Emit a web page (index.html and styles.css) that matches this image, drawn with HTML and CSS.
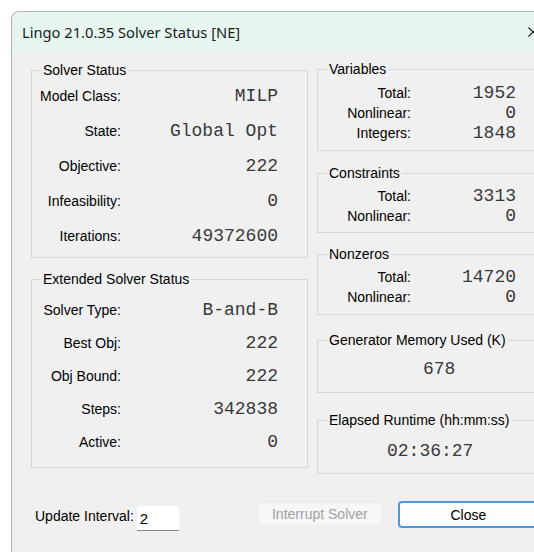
FILE: index.html
```html
<!DOCTYPE html>
<html lang="en">
<head>
<meta charset="utf-8">
<title>Lingo 21.0.35 Solver Status [NE]</title>
<link rel="stylesheet" href="styles.css">
</head>
<body>
<div class="window">
  <div class="titlebar">
    <span class="title">Lingo 21.0.35 Solver Status [NE]</span>
    <svg class="close-x" width="10" height="10" viewBox="0 0 10 10" aria-hidden="true">
      <path d="M0.5 0.5 L9.5 9.5 M9.5 0.5 L0.5 9.5" stroke="#1b1b1b" stroke-width="1.1" fill="none"/>
    </svg>
  </div>
  <div class="client">
    <div class="panes">
      <div class="col-left">
        <fieldset class="group status">
          <legend>Solver Status</legend>
          <div class="kv-left">
            <span class="lbl">Model Class:</span><span class="val">MILP</span>
            <span class="lbl">State:</span><span class="val">Global Opt</span>
            <span class="lbl">Objective:</span><span class="val">222</span>
            <span class="lbl">Infeasibility:</span><span class="val">0</span>
            <span class="lbl">Iterations:</span><span class="val">49372600</span>
          </div>
        </fieldset>
        <fieldset class="group extended">
          <legend>Extended Solver Status</legend>
          <div class="kv-left ext">
            <span class="lbl">Solver Type:</span><span class="val">B-and-B</span>
            <span class="lbl">Best Obj:</span><span class="val">222</span>
            <span class="lbl">Obj Bound:</span><span class="val">222</span>
            <span class="lbl">Steps:</span><span class="val">342838</span>
            <span class="lbl">Active:</span><span class="val">0</span>
          </div>
        </fieldset>
      </div>
      <div class="col-right">
        <fieldset class="group variables">
          <legend>Variables</legend>
          <div class="kv-right">
            <span class="lbl">Total:</span><span class="val">1952</span>
            <span class="lbl">Nonlinear:</span><span class="val">0</span>
            <span class="lbl">Integers:</span><span class="val">1848</span>
          </div>
        </fieldset>
        <fieldset class="group constraints">
          <legend>Constraints</legend>
          <div class="kv-right">
            <span class="lbl">Total:</span><span class="val">3313</span>
            <span class="lbl">Nonlinear:</span><span class="val">0</span>
          </div>
        </fieldset>
        <fieldset class="group nonzeros">
          <legend>Nonzeros</legend>
          <div class="kv-right">
            <span class="lbl">Total:</span><span class="val">14720</span>
            <span class="lbl">Nonlinear:</span><span class="val">0</span>
          </div>
        </fieldset>
        <fieldset class="group memory">
          <legend>Generator Memory Used (K)</legend>
          <div class="single mem-val">678</div>
        </fieldset>
        <fieldset class="group runtime">
          <legend>Elapsed Runtime (hh:mm:ss)</legend>
          <div class="single time-val">02:36:27</div>
        </fieldset>
      </div>
    </div>
    <div class="footer">
      <label class="interval-lbl" for="interval">Update Interval:</label>
      <input id="interval" class="interval" type="text" value="2">
      <button class="btn interrupt" disabled>Interrupt Solver</button>
      <button class="btn close">Close</button>
    </div>
  </div>
</div>
</body>
</html>
```
FILE: styles.css
```css
html, body {
  margin: 0;
  padding: 0;
  background: #ffffff;
  overflow: hidden;
  width: 534px;
  height: 552px;
}

body {
  font-family: "Liberation Sans", Arial, sans-serif;
  font-size: 14px;
  color: #000;
}

.window {
  margin: 11px 0 0 11px;
  width: 548px;
  height: 560px;
  border: 1px solid #b4b4b4;
  border-bottom: none;
  border-radius: 8px 8px 0 0;
  overflow: hidden;
  background: #f0f0f0;
}

.titlebar {
  height: 39px;
  background: #e6f6ef;
  display: flex;
  align-items: center;
  justify-content: space-between;
  padding: 0 22px 0 10px;
}

.title {
  font-family: "Noto Sans", "Open Sans", sans-serif;
  font-size: 14.7px;
  color: #1b1b1b;
}

.close-x {
  display: block;
}

.client {
  padding: 11px 0 0 19px;
}

.panes {
  display: flex;
  gap: 9px;
  align-items: flex-start;
}

.col-left {
  width: 277px;
  display: flex;
  flex-direction: column;
}

.col-right {
  width: 223px;
  display: flex;
  flex-direction: column;
}

.group {
  margin: 0;
  border: 1px solid #d6d6d6;
  padding: 0;
  min-width: 0;
}

.group legend {
  margin-left: 9px;
  padding: 0 2px;
  line-height: 16px;
  font-size: 14px;
  color: #000;
}

.val {
  font-family: "Liberation Mono", "Courier New", monospace;
  font-size: 18px;
  color: #383838;
}

/* left column label/value grids */
.kv-left {
  display: grid;
  grid-template-columns: 89px 157px;
  grid-auto-rows: 35px;
  align-items: center;
}

.kv-left .lbl,
.kv-left .val {
  text-align: right;
}

.status {
  padding-bottom: 4px;
}

.extended {
  margin-top: 13px;
  padding-top: 6px;
  padding-bottom: 9px;
}

.kv-left.ext {
  grid-auto-rows: 33px;
}

/* right column label/value grids */
.kv-right {
  display: grid;
  grid-template-columns: 93px 105px;
  grid-auto-rows: 20px;
  align-items: center;
}

.kv-right .lbl,
.kv-right .val {
  text-align: right;
}

.variables {
  margin-top: -1px;
  padding: 6px 0 7px;
}

.constraints {
  margin-top: 14px;
  padding: 5px 0 6px;
}

.nonzeros {
  margin-top: 13px;
  padding: 5px 0 7px;
}

.memory {
  margin-top: 17px;
  padding: 11px 0 13px;
}

.runtime {
  margin-top: 19px;
  padding: 13px 0 12px;
}

.single {
  font-family: "Liberation Mono", "Courier New", monospace;
  font-size: 18px;
  line-height: 20px;
  color: #383838;
}

.mem-val {
  padding-left: 105px;
}

.time-val {
  padding-left: 69px;
}

/* footer row */
.footer {
  display: flex;
  align-items: flex-start;
  margin-top: 27px;
  padding-left: 4px;
}

.interval-lbl {
  margin-top: 7px;
  line-height: 16px;
}

.interval {
  margin: 5px 0 0 3px;
  width: 42px;
  height: 25px;
  box-sizing: border-box;
  border: none;
  border-bottom: 1px solid #868686;
  border-radius: 3px 3px 0 0;
  background: #fff;
  padding: 0 0 0 3px;
  font-family: "Liberation Sans", Arial, sans-serif;
  font-size: 15px;
  color: #000;
  outline: none;
}

.btn {
  box-sizing: border-box;
  font-family: "Liberation Sans", Arial, sans-serif;
  font-size: 14px;
  border-radius: 4px;
  padding: 0;
}

.interrupt {
  margin: 1px 0 0 78px;
  width: 126px;
  height: 24px;
  background: #f6f6f6;
  border: 1px solid #ececec;
  color: #a2a2a2;
}

.close {
  margin-left: 15px;
  width: 141px;
  height: 27px;
  background: #fdfdfd;
  border: 2px solid #4d97dc;
  color: #000;
}
```
